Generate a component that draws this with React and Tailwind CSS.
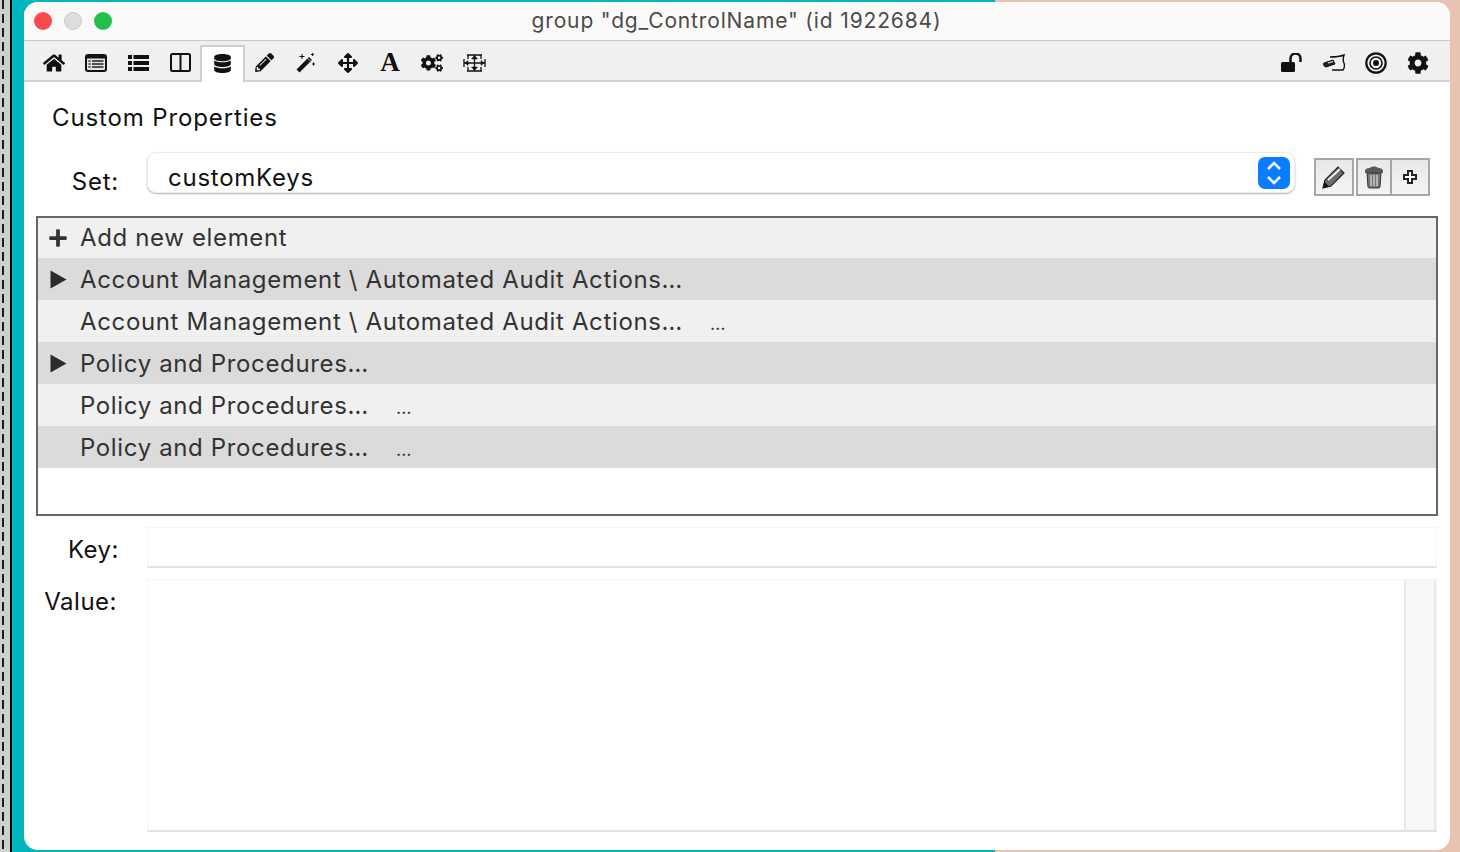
import React from 'react';
import { FaHome, FaDatabase, FaPencilAlt, FaArrowsAlt, FaCogs, FaCog, FaPlus } from 'react-icons/fa';

const ListAltIcon = () => (
  <svg width="22" height="18" viewBox="0 0 22 18">
    <rect x="1" y="1" width="20" height="16" rx="2" fill="#e4e4e4" stroke="#111" strokeWidth="2" />
    <rect x="1" y="1" width="20" height="3.500" fill="#111" />
    <path d="M3.500 7h2M3.500 10h2M3.500 13h2M7 7h11.500M7 10h11.500M7 13h11.500" stroke="#222" strokeWidth="1.500" />
  </svg>
);

const ListIcon = () => (
  <svg width="21" height="18" viewBox="0 0 21 18" fill="#111">
    <path d="M0 1h4v4H0zM5.500 1H21v4H5.500zM0 7h4v4H0zM5.500 7H21v4H5.500zM0 13h4v4H0zM5.500 13H21v4H5.500z" />
  </svg>
);

const ColumnsIcon = () => (
  <svg width="21" height="19" viewBox="0 0 21 19" fill="none" stroke="#111" strokeWidth="2">
    <rect x="1" y="1" width="19" height="17" rx="1.500" />
    <path d="M10.500 1v17" />
  </svg>
);

const WandIcon = () => (
  <svg width="20" height="20" viewBox="0 0 20 20">
    <path d="M0.500 16.500L13 4l3 3L3.500 19.500z" fill="#111" />
    <path d="M12 5.500l2.500 2.500" stroke="#fff" strokeWidth="0.800" fill="none" />
    <path d="M6 1v5M3.500 3.500h5M16.500 0v3M15 1.500h3M17.500 9.500v3M16 11h3" stroke="#111" strokeWidth="1" />
  </svg>
);

const SizeIcon = () => (
  <svg width="23" height="18" viewBox="0 0 23 18" fill="none" stroke="#111" strokeWidth="1.300">
    <path d="M1 5v8M22 5v8M1 9h21M4 1h15M4 17h15M11.500 1v16M5 1v4M18 1v4M5 13v4M18 13v4" />
    <path d="M8.500 5h6l-3-3.500zM8.500 13h6l-3 3.500z" fill="#111" strokeWidth="0.500" />
    <path d="M2 9l3-2.500v5zM21 9l-3-2.500v5z" fill="#111" strokeWidth="0.500" />
  </svg>
);

const OpenLockIcon = () => (
  <svg width="22" height="20" viewBox="0 0 22 20">
    <rect x="0" y="9" width="14" height="10" rx="1.500" fill="#111" />
    <path d="M9.500 9V5.500a5 5 0 0 1 10 0V9" fill="none" stroke="#111" strokeWidth="2.500" />
  </svg>
);

const ScriptIcon = () => (
  <svg width="22" height="20" viewBox="0 0 22 20" fill="none" stroke="#111" strokeWidth="1.400">
    <path d="M7 4c4 0 9 0 14-2-1 3-1.500 5 0 8 1 3 0.500 5-1 7H9" />
    <path d="M1 10l9-3 2 4-9 3c-2 0-3-3-2-4z" fill="#222" strokeWidth="1" />
    <path d="M5 10l5-1.500" stroke="#fff" strokeWidth="1" />
  </svg>
);

const TargetIcon = () => (
  <svg width="22" height="22" viewBox="0 0 22 22" fill="none" stroke="#111">
    <circle cx="11" cy="11" r="9.700" strokeWidth="2.200" />
    <circle cx="11" cy="11" r="6" strokeWidth="1.600" />
    <circle cx="11" cy="11" r="3" fill="#111" strokeWidth="0" />
  </svg>
);

const PlayIcon = () => (
  <svg width="17" height="19" viewBox="0 0 17 19">
    <path d="M0.500 0.500L16.500 9.500L0.500 18.500z" fill="#2b2b2b" />
  </svg>
);

const EditIcon = () => (
  <svg width="24" height="24" viewBox="0 0 24 24">
    <path d="M1 23l2-8L16 2l6 6L9 21z" fill="#6e6e6e" stroke="#222" strokeWidth="1.200" />
    <path d="M6 15L18 4" stroke="#eee" strokeWidth="1.800" />
    <path d="M1 23l1.500-6 4.500 4.500z" fill="#111" />
  </svg>
);

const TrashIcon = () => (
  <svg width="20" height="24" viewBox="0 0 20 24">
    <path d="M1 6c0-3 4-3 5-3 1-2 7-2 8 0 1 0 5 0 5 3v2H1z" fill="#5a5a5a" />
    <path d="M3 8h14l-1 14a1.500 1.500 0 0 1-1.500 1h-9A1.500 1.500 0 0 1 4 22z" fill="#777" stroke="#333" strokeWidth="1" />
    <path d="M7 10v11M10 10v11M13 10v11" stroke="#ddd" strokeWidth="1.200" />
  </svg>
);

const OutlinePlus = () => (
  <svg width="16" height="16" viewBox="0 0 16 16" fill="#fff" stroke="#222" strokeWidth="2">
    <path d="M6 2h4v4h4v4h-4v4H6v-4H2V6h4z" />
  </svg>
);

const leftTools = [
  { id: 'home', icon: <FaHome size={22} /> },
  { id: 'basic', icon: <ListAltIcon /> },
  { id: 'list', icon: <ListIcon /> },
  { id: 'columns', icon: <ColumnsIcon /> },
  { id: 'custom', icon: <FaDatabase size={19} />, active: true },
  { id: 'pencil', icon: <FaPencilAlt size={19} /> },
  { id: 'magic', icon: <WandIcon /> },
  { id: 'move', icon: <FaArrowsAlt size={20} /> },
  { id: 'font', icon: <span className="font-['Liberation_Serif',serif] text-[27px] leading-none font-bold tracking-normal">A</span> },
  { id: 'cogs', icon: <FaCogs size={22} /> },
  { id: 'size', icon: <SizeIcon /> },
];

const rightTools = [
  { id: 'lock', icon: <OpenLockIcon /> },
  { id: 'script', icon: <ScriptIcon /> },
  { id: 'target', icon: <TargetIcon /> },
  { id: 'settings', icon: <FaCog size={22} /> },
];

const rows = [
  { text: 'Add new element', icon: 'plus', dark: false },
  { text: 'Account Management \\ Automated Audit Actions…', icon: 'play', dark: true, tall: true },
  { text: 'Account Management \\ Automated Audit Actions…', extra: '…', dark: false, tall: true },
  { text: 'Policy and Procedures…', icon: 'play', dark: true, tall: true },
  { text: 'Policy and Procedures…', extra: '…', dark: false, tall: true },
  { text: 'Policy and Procedures…', extra: '…', dark: true, tall: true },
];

const ToolButton = ({ tool }) => (
  <div
    className={
      tool.active
        ? 'mb-[-2px] ml-[-1px] mr-[-2px] flex h-[37px] w-[45px] items-center justify-center self-end border-x-2 border-t-2 border-[#cfcfcf] bg-white pb-[3px] text-[#111]'
        : 'flex h-[40px] w-[42px] items-center justify-center pt-[3px] text-[#111]'
    }
  >
    {tool.icon}
  </div>
);

const PropertyRow = ({ row }) => (
  <div className={`flex items-center text-[#333] ${row.tall ? 'h-[42px] pt-[1px]' : 'h-[40px]'} ${row.dark ? 'bg-[#dbdbdb]' : 'bg-[#f0f0f0]'}`}>
    <div className="flex w-[42px] shrink-0 items-center justify-center pr-[2px]">
      {row.icon === 'plus' && <FaPlus size={20} />}
      {row.icon === 'play' && <PlayIcon />}
    </div>
    <span>{row.text}</span>
    {row.extra && <span className="ml-[27px] pt-[4px] text-[18px] tracking-normal">{row.extra}</span>}
  </div>
);

const App = () => {
  return (
    <div className="flex h-[852px] w-[1460px] overflow-hidden font-['Inter',sans-serif] text-[24px] tracking-[0.75px] text-[#111]">
      {/* dashed strip on the far left */}
      <div className="flex w-[12px] shrink-0">
        <div className="w-[10px] bg-[#cfcfcf] bg-[linear-gradient(180deg,#1c1c1c_9px,#cfcfcf_9px)] bg-[length:2px_14px] bg-[position:2px_0] bg-repeat-y" />
        <div className="w-[2px] bg-black" />
      </div>

      <div className="flex flex-1 bg-[linear-gradient(90deg,#00b5bc_983px,#e8c3b2_983px)] py-[2px] pl-[12px] pr-[10px]">
        {/* window */}
        <div className="flex w-[1426px] flex-col overflow-hidden rounded-[14px] bg-white">
          <div className="flex h-[39px] shrink-0 items-center border-b border-[#c9c9c9] bg-[#fbfaf9] pl-[10px]">
            <div className="flex gap-[12px]">
              <span className="h-[18px] w-[18px] rounded-full bg-[#fc4a4c]" />
              <span className="h-[18px] w-[18px] rounded-full border border-[#c8c8c6] bg-[#dfdedc]" />
              <span className="h-[18px] w-[18px] rounded-full bg-[#1fc14a]" />
            </div>
            <div className="flex-1 pr-[89px] text-center text-[21px] tracking-[0.85px] text-[#4a4a4a]">
              group "dg_ControlName" (id 1922684)
            </div>
          </div>

          <div className="flex h-[41px] shrink-0 justify-between border-b-2 border-[#d2d2d2] bg-[#f0f0f0] pl-[9px] pr-[11px]">
            <div className="flex">
              {leftTools.map((tool) => <ToolButton key={tool.id} tool={tool} />)}
            </div>
            <div className="flex">
              {rightTools.map((tool) => <ToolButton key={tool.id} tool={tool} />)}
            </div>
          </div>

          <div className="flex flex-1 flex-col px-[12px]">
            <div className="pl-[16px] pt-[21px] leading-[30px] tracking-[0.87px]">Custom Properties</div>

            <div className="mt-[19px] flex items-start">
              <div className="w-[83px] pt-[15px] text-right leading-[30px]">Set:</div>
              <div className="ml-[28px] flex h-[41px] w-[1148px] items-center justify-between rounded-[9px] border border-[#ececec] bg-white pl-[20px] pr-[4px] shadow-[0_1px_2px_rgba(0,0,0,0.3)]">
                <span className="pt-[10px]">customKeys</span>
                <div className="flex h-[32px] w-[32px] flex-col items-center justify-center rounded-[7px] bg-[#0a7cff]">
                  <svg width="18" height="28" viewBox="0 0 18 28" fill="none" stroke="#fff" strokeWidth="2.500">
                    <path d="M3 10l6-6 6 6M3 18l6 6 6-6" />
                  </svg>
                </div>
              </div>
              <div className="ml-[19px] mt-[6px] flex">
                <div className="flex h-[38px] w-[40px] items-center justify-center border-2 border-[#a6a6a6] bg-[linear-gradient(180deg,#e8e8e8,#f4f4f4)]">
                  <EditIcon />
                </div>
                <div className="ml-[2px] flex h-[38px] w-[36px] items-center justify-center border-2 border-[#a6a6a6] bg-[linear-gradient(180deg,#e8e8e8,#f4f4f4)]">
                  <TrashIcon />
                </div>
                <div className="ml-[-2px] flex h-[38px] w-[40px] items-center justify-center border-2 border-[#a6a6a6] bg-[linear-gradient(180deg,#e8e8e8,#f4f4f4)]">
                  <OutlinePlus />
                </div>
              </div>
            </div>

            <div className="mt-[19px] h-[300px] border-2 border-[#666] bg-white tracking-[0.64px]">
              {rows.map((row, i) => <PropertyRow key={i} row={row} />)}
            </div>

            <div className="mt-[11px] flex">
              <div className="w-[83px] pt-[8px] text-right leading-[30px] tracking-[0.5px]">Key:</div>
              <div className="ml-[28px] h-[41px] w-[1290px] border border-b-2 border-[#f5f5f5] border-b-[#e2e2e2] bg-white" />
            </div>

            <div className="mt-[11px] flex">
              <div className="w-[81px] pt-[8px] text-right leading-[30px] tracking-[0.5px]">Value:</div>
              <div className="ml-[30px] flex h-[253px] w-[1290px] justify-end border border-b-2 border-[#f5f5f5] border-b-[#e2e2e2] bg-white">
                <div className="w-[32px] border-x-2 border-[#e9e9e9] bg-[#f8f8f8]" />
              </div>
            </div>
          </div>
        </div>
      </div>
    </div>
  );
};

export default App;
